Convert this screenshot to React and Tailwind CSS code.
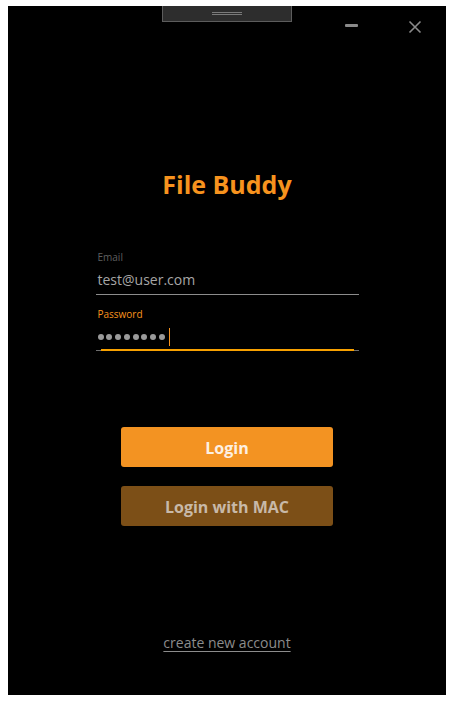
import React from "react";

export default function App() {
  const font = { fontFamily: '"Open Sans", "Noto Sans", sans-serif' };
  return (
    <div className="w-[454px] h-[701px] bg-white pl-[8px] pt-[6px]" style={font}>
      <div className="w-[438px] h-[689px] bg-black flex flex-col items-center">
        {/* title bar */}
        <div className="relative w-full h-[16px] flex justify-center">
          <div className="w-[130px] h-[16px] bg-[#2d2d2d] border-x border-b border-[#5c5c5c] flex flex-col items-center justify-center gap-[1px]">
            <div className="w-[30px] h-[1px] bg-[#7a7a7a]" />
            <div className="w-[30px] h-[1px] bg-[#7a7a7a]" />
          </div>
          <div className="absolute left-[337px] top-[18px] w-[13px] h-[3px] bg-[#8a8a8a] rounded-[1px]" />
          <svg className="absolute left-[400px] top-[14px]" width="14" height="14" viewBox="0 0 14 14">
            <path d="M1.5 1.5 L12.5 12.5 M12.5 1.5 L1.5 12.5" stroke="#8a8a8a" strokeWidth="1.6" fill="none" />
          </svg>
        </div>

        <div className="mt-[146px] text-[25px] leading-[32px] font-bold text-[#f7931e]">File Buddy</div>

        {/* Email */}
        <div className="mt-[50px] w-[263px] flex flex-col">
          <div className="pl-[2px] text-[10px] leading-[14px] text-[#5f5f5f]">Email</div>
          <div className="mt-[6px] pl-[2px] pb-[4px] text-[14px] leading-[20px] text-[#a6a6a6] border-b border-[#8c8c8c]">
            test@user.com
          </div>
        </div>

        {/* Password */}
        <div className="mt-[12px] w-[263px] flex flex-col">
          <div className="pl-[2px] text-[10px] leading-[14px] text-[#f7931e]">Password</div>
          <div className="relative mt-[6px] pl-[2px] h-[24px] border-b border-[#6e6e6e] flex items-start">
            <div className="h-[20px] flex items-center gap-[2.75px]">
              {[0, 1, 2, 3, 4, 5, 6, 7].map((i) => (
                <div key={i} className="w-[6px] h-[6px] rounded-full bg-[#9a9a9a]" />
              ))}
              <div className="ml-[1px] w-[1.5px] h-[18px] bg-[#f7931e]" />
            </div>
            <div className="absolute left-[5px] right-[5px] bottom-[-1px] h-[2px] bg-[#f7a100]" />
          </div>
        </div>

        <button className="mt-[76px] w-[212px] h-[40px] rounded-[3px] bg-[#f39322] text-[16px] font-bold text-[#fdf0e2] pt-[2px]">
          Login
        </button>
        <button className="mt-[19px] w-[212px] h-[40px] rounded-[3px] bg-[#7c4f17] text-[16px] font-bold text-[#c8b9a8] pt-[2px]">
          Login with MAC
        </button>

        <div className="mt-[107px] text-[14px] leading-[20px] text-[#8c8c8c] underline underline-offset-[3px]">
          create new account
        </div>
      </div>
    </div>
  );
}
